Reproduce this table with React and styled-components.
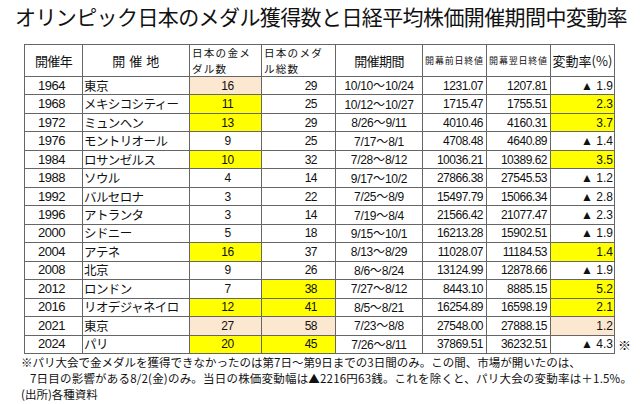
import React from "react";
import styled, { createGlobalStyle } from "styled-components";

const Global = createGlobalStyle`
  html, body { margin: 0; padding: 0; background: #ffffff; }
  body { font-family: "Noto Sans CJK JP", "Liberation Sans", sans-serif; color: #111; }
`;

const Page = styled.div`
  width: 640px;
  height: 404px;
  overflow: hidden;
  display: flex;
  flex-direction: column;
`;

const Title = styled.h1`
  margin: 0;
  padding: 1px 0 0 15px;
  height: 30px;
  line-height: 30px;
  font-size: 21px;
  font-weight: 400;
  letter-spacing: -0.6px;
  white-space: nowrap;
`;

const TableRow = styled.div`
  display: flex;
  align-items: flex-end;
  margin: 13px 0 0 24px;
`;

const Table = styled.table`
  border-collapse: collapse;
  table-layout: fixed;
  width: 590px;
  border: 1px solid #666;
`;

const Mark = styled.span`
  font-size: 13px;
  line-height: 16px;
  margin-left: 3px;
  margin-bottom: 1px;
`;

const HeadRow = styled.tr`
  height: 32px;
`;

const BodyRow = styled.tr`
  height: 18.47px;
`;

const Th = styled.th`
  border: 1px solid #666;
  padding: 0;
  padding-left: ${(p) => (p.$left ? "2px" : "0")};
  font-weight: 400;
  font-size: ${(p) => p.$size || 13}px;
  letter-spacing: ${(p) => (p.$ls !== undefined ? p.$ls : -0.6)}px;
  line-height: 15px;
  text-align: ${(p) => (p.$left ? "left" : "center")};
  vertical-align: middle;
  white-space: nowrap;
  overflow: hidden;
`;

const HeadLine = styled.span`
  display: block;
  height: 15.4px;
  line-height: 15.4px;
  font-size: 10.6px;
  letter-spacing: 1.2px;
`;

const bg = (tone) =>
  tone === "y" ? "#ffff00" : tone === "p" ? "#fce8d0" : "#ffffff";

const Td = styled.td`
  border: 1px solid #666;
  padding: 0 ${(p) => p.$pr || 0}px 0 ${(p) => p.$pl || 0}px;
  background: ${(p) => bg(p.$tone)};
  font-family: ${(p) =>
    p.$kana
      ? `"Noto Sans CJK JP", sans-serif`
      : `"Liberation Sans", "Noto Sans CJK JP", sans-serif`};
  font-size: ${(p) => p.$size || 12}px;
  letter-spacing: ${(p) => (p.$ls !== undefined ? p.$ls : -0.5)}px;
  line-height: 16px;
  text-align: ${(p) => p.$align || "center"};
  vertical-align: middle;
  white-space: nowrap;
  overflow: hidden;
`;

const Tilde = styled.span`
  font-family: "Noto Sans CJK JP", sans-serif;
  letter-spacing: 0;
`;

const Notes = styled.div`
  padding: 0 0 0 21px;
  font-size: 11.5px;
  line-height: 16px;
`;

const NoteLine = styled.div`
  white-space: nowrap;
  padding-left: ${(p) => p.$indent || 0}px;
  letter-spacing: ${(p) => p.$ls || 0}px;
`;

const rows = [
  ["1964", "東京", "16", "29", "10/10～10/24", "1231.07", "1207.81", "▲ 1.9", "p", "", ""],
  ["1968", "メキシコシティー", "11", "25", "10/12～10/27", "1715.47", "1755.51", "2.3", "y", "", "y"],
  ["1972", "ミュンヘン", "13", "29", "8/26～9/11", "4010.46", "4160.31", "3.7", "y", "", "y"],
  ["1976", "モントリオール", "9", "25", "7/17～8/1", "4708.48", "4640.89", "▲ 1.4", "", "", ""],
  ["1984", "ロサンゼルス", "10", "32", "7/28～8/12", "10036.21", "10389.62", "3.5", "y", "", "y"],
  ["1988", "ソウル", "4", "14", "9/17～10/2", "27866.38", "27545.53", "▲ 1.2", "", "", ""],
  ["1992", "バルセロナ", "3", "22", "7/25～8/9", "15497.79", "15066.34", "▲ 2.8", "", "", ""],
  ["1996", "アトランタ", "3", "14", "7/19～8/4", "21566.42", "21077.47", "▲ 2.3", "", "", ""],
  ["2000", "シドニー", "5", "18", "9/15～10/1", "16213.28", "15902.51", "▲ 1.9", "", "", ""],
  ["2004", "アテネ", "16", "37", "8/13～8/29", "11028.07", "11184.53", "1.4", "y", "", "y"],
  ["2008", "北京", "9", "26", "8/6～8/24", "13124.99", "12878.66", "▲ 1.9", "", "", ""],
  ["2012", "ロンドン", "7", "38", "7/27～8/12", "8443.10", "8885.15", "5.2", "", "y", "y"],
  ["2016", "リオデジャネイロ", "12", "41", "8/5～8/21", "16254.89", "16598.19", "2.1", "y", "y", "y"],
  ["2021", "東京", "27", "58", "7/23～8/8", "27548.00", "27888.15", "1.2", "p", "p", "p"],
  ["2024", "パリ", "20", "45", "7/26～8/11", "37869.51", "36232.51", "▲ 4.3", "y", "y", ""],
];

const Period = ({ text }) => {
  const [a, b] = text.split("～");
  return (
    <>
      {a}
      <Tilde>～</Tilde>
      {b}
    </>
  );
};

export default function App() {
  return (
    <Page>
      <Global />
      <Title>オリンピック日本のメダル獲得数と日経平均株価開催期間中変動率</Title>
      <TableRow>
        <Table>
          <colgroup>
            <col style={{ width: 58 }} />
            <col style={{ width: 107 }} />
            <col style={{ width: 72 }} />
            <col style={{ width: 74 }} />
            <col style={{ width: 87 }} />
            <col style={{ width: 64 }} />
            <col style={{ width: 64 }} />
            <col style={{ width: 64 }} />
          </colgroup>
          <thead>
            <HeadRow>
              <Th>開催年</Th>
              <Th $ls={0.5}>開 催 地</Th>
              <Th $left>
                <HeadLine>日本の金メ</HeadLine>
                <HeadLine>ダル数</HeadLine>
              </Th>
              <Th $left>
                <HeadLine>日本のメダ</HeadLine>
                <HeadLine>ル総数</HeadLine>
              </Th>
              <Th>開催期間</Th>
              <Th $size={9} $ls={0.8}>開幕前日終値</Th>
              <Th $size={9} $ls={0.8}>開幕翌日終値</Th>
              <Th $ls={0}>変動率(%)</Th>
            </HeadRow>
          </thead>
          <tbody>
            {rows.map((r) => (
              <BodyRow key={r[0]}>
                <Td $size={13} $pr={4}>{r[0]}</Td>
                <Td $kana $align="left" $pl={1} $ls={-0.6} $size={12.5}>{r[1]}</Td>
                <Td $tone={r[8]} $pl={4}>{r[2]}</Td>
                <Td $tone={r[9]} $align="right" $pr={18}>{r[3]}</Td>
                <Td $ls={-0.3}>
                  <Period text={r[4]} />
                </Td>
                <Td $align="right" $pr={3}>{r[5]}</Td>
                <Td $align="right" $pr={3}>{r[6]}</Td>
                <Td $tone={r[10]} $align="right" $pr={1} $ls={0}>{r[7]}</Td>
              </BodyRow>
            ))}
          </tbody>
        </Table>
        <Mark>※</Mark>
      </TableRow>
      <Notes>
        <NoteLine>
          ※パリ大会で金メダルを獲得できなかったのは第7日～第9日までの3日間のみ。この間、市場が開いたのは、
        </NoteLine>
        <NoteLine $indent={9} $ls={0.2}>
          7日目の影響がある8/2(金)のみ。当日の株価変動幅は▲2216円63銭。これを除くと、パリ大会の変動率は＋1.5%。
        </NoteLine>
        <NoteLine>(出所)各種資料</NoteLine>
      </Notes>
    </Page>
  );
}
